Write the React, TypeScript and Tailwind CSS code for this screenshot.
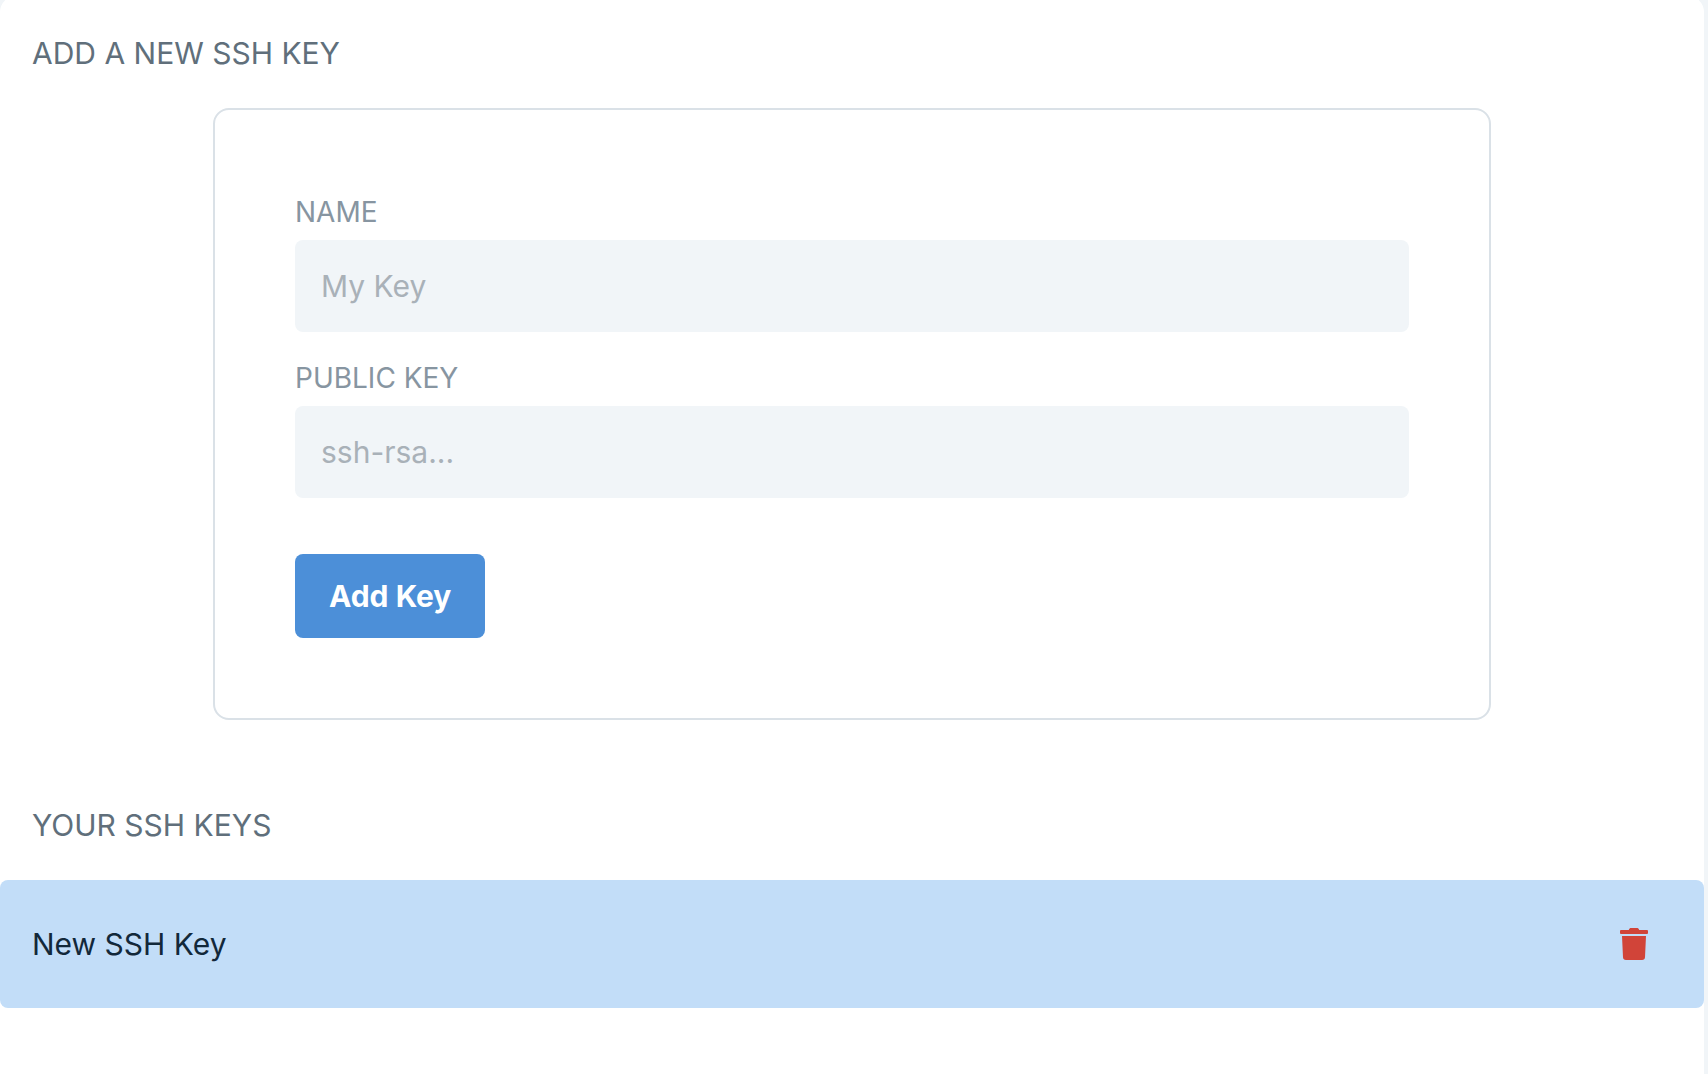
import { useId } from "react";

function TrashIcon() {
  return (
    <svg viewBox="0 0 28 32" className="h-8 w-7" fill="currentColor" aria-hidden="true">
      <path d="M1 2h7.800C9.200.6 10 0 11.200 0h5.600c1.200 0 2 .6 2.400 2H27a1 1 0 0 1 1 1v2a1 1 0 0 1-1 1H1a1 1 0 0 1-1-1V3a1 1 0 0 1 1-1z" />
      <path d="M2 8h24l-1 21.200A3 3 0 0 1 22 32H6a3 3 0 0 1-3-2.800z" />
    </svg>
  );
}

function Field({ label, placeholder }: { label: string; placeholder: string }) {
  const id = useId();
  return (
    <div className="flex flex-col gap-2">
      <label htmlFor={id} className="text-[28px] leading-10 text-[#8795a1] uppercase">
        {label}
      </label>
      <input
        id={id}
        type="text"
        placeholder={placeholder}
        className="h-[92px] w-full rounded-lg bg-[#f1f5f8] px-[26px] text-[30px] text-[#22292f] outline-none placeholder:text-[#a9b1b8] placeholder:opacity-100"
      />
    </div>
  );
}

function SectionTitle({ children }: { children: string }) {
  return <h2 className="px-8 text-[30px] leading-[42px] text-[#606f7b] uppercase">{children}</h2>;
}

export default function App() {
  return (
    <div className="flex min-h-screen flex-col bg-[#f1f5f8] pr-1 font-[Inter,sans-serif]">
      <main className="-mt-1 flex grow flex-col rounded-t-2xl bg-white pt-9">
        <section className="flex flex-col gap-[34px]">
          <SectionTitle>Add a new SSH key</SectionTitle>
          <form
            className="mx-auto flex w-3/4 flex-col gap-[26px] rounded-2xl border-2 border-[#dae1e7] px-20 pt-[82px] pb-20"
            onSubmit={(event) => event.preventDefault()}
          >
            <Field label="Name" placeholder="My Key" />
            <Field label="Public Key" placeholder="ssh-rsa..." />
            <button
              type="submit"
              className="mt-[30px] h-[84px] self-start rounded-lg bg-[#4c8fd8] px-[34px] text-[30px] font-bold text-white"
            >
              Add Key
            </button>
          </form>
        </section>
        <section className="mt-[84px] flex flex-col gap-[34px]">
          <SectionTitle>Your SSH keys</SectionTitle>
          <ul>
            <li className="flex h-32 items-center justify-between rounded-lg bg-[#c2ddf8] pr-14 pl-8 text-[30px] text-[#12283a]">
              <span>New SSH Key</span>
              <button type="button" aria-label="Delete New SSH Key" className="text-[#d14439]">
                <TrashIcon />
              </button>
            </li>
          </ul>
        </section>
      </main>
    </div>
  );
}
